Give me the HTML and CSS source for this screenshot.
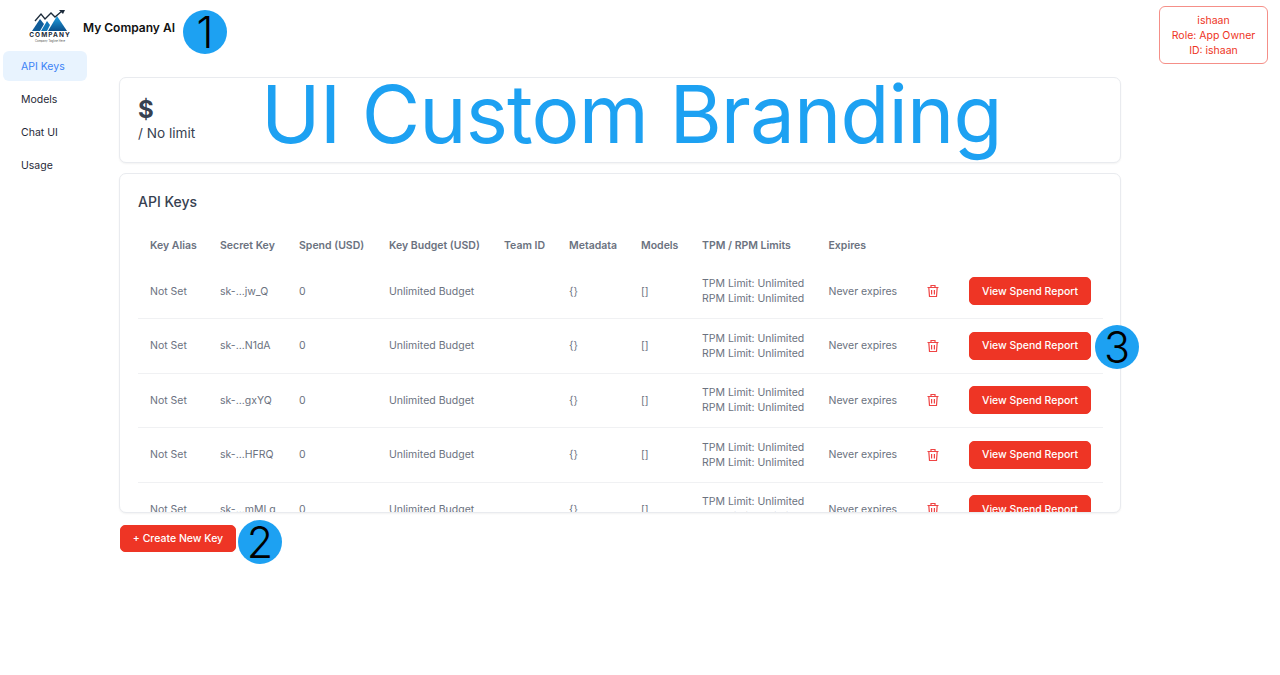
FILE: index.html
```html
<!DOCTYPE html>
<html lang="en">
<head>
  <meta charset="UTF-8">
  <meta name="viewport" content="width=device-width, initial-scale=1.0">
  <title>My Company AI</title>
  <link rel="stylesheet" href="styles.css">
</head>
<body>
  <header class="topbar">
    <div class="logo">
      <svg class="logo-mark" width="46" height="22" viewBox="0 0 46 22">
        <defs>
          <linearGradient id="peak" x1="0" y1="0" x2="0" y2="1">
            <stop offset="0" stop-color="#1f9fe0"/>
            <stop offset="1" stop-color="#0b4f8a"/>
          </linearGradient>
        </defs>
        <path d="M5 21 L13 9 L17 14 L13 21 Z" fill="#0f5c99"/>
        <path d="M14 21 L20 11 L23 15 L20 21 Z" fill="#1277b8"/>
        <path d="M21 21 L30 6 L40 21 Z" fill="url(#peak)"/>
        <path d="M8 11 L14 4 L18 9 L24 3 L28 7 L35 1" fill="none" stroke="#1c2b3a" stroke-width="1.3"/>
        <path d="M32 0 L38 0 L36 4 Z" fill="#1c2b3a"/>
      </svg>
      <div class="logo-name">COMPANY</div>
      <div class="logo-tag">Company Tagline Here</div>
    </div>
    <div class="brand">My Company AI</div>
    <div class="user-box">
      <div>ishaan</div>
      <div>Role: App Owner</div>
      <div>ID: ishaan</div>
    </div>
  </header>

  <div class="layout">
    <nav class="sidebar">
      <a class="nav-item active">API Keys</a>
      <a class="nav-item">Models</a>
      <a class="nav-item">Chat UI</a>
      <a class="nav-item">Usage</a>
    </nav>

    <main class="content">
      <section class="card spend-card">
        <div class="spend-value">$</div>
        <div class="spend-limit">/ No limit</div>
      </section>

      <section class="card keys-card">
        <h3 class="card-title">API Keys</h3>
        <table class="keys-table">
          <colgroup>
            <col class="c-alias"><col class="c-secret"><col class="c-spend"><col class="c-budget"><col class="c-team">
            <col class="c-meta"><col class="c-models"><col class="c-limits"><col class="c-expires"><col class="c-trash"><col class="c-report">
          </colgroup>
          <thead>
            <tr>
              <th>Key Alias</th><th>Secret Key</th><th>Spend (USD)</th><th>Key Budget (USD)</th><th>Team ID</th>
              <th>Metadata</th><th>Models</th><th>TPM / RPM Limits</th><th>Expires</th><th></th><th></th>
            </tr>
          </thead>
          <tbody>
            <tr>
              <td>Not Set</td><td>sk-...jw_Q</td><td>0</td><td>Unlimited Budget</td><td></td><td>{}</td><td>[]</td>
              <td>TPM Limit: Unlimited<br>RPM Limit: Unlimited</td><td>Never expires</td>
              <td><svg class="trash" viewBox="0 0 14 14"><path d="M1.5 3.5h11M5 3.5V1.5h4v2M2.8 3.5l.7 9h7l.7-9M5.6 6v4.5M8.4 6v4.5"/></svg></td>
              <td><button class="btn">View Spend Report</button></td>
            </tr>
            <tr>
              <td>Not Set</td><td>sk-...N1dA</td><td>0</td><td>Unlimited Budget</td><td></td><td>{}</td><td>[]</td>
              <td>TPM Limit: Unlimited<br>RPM Limit: Unlimited</td><td>Never expires</td>
              <td><svg class="trash" viewBox="0 0 14 14"><path d="M1.5 3.5h11M5 3.5V1.5h4v2M2.8 3.5l.7 9h7l.7-9M5.6 6v4.5M8.4 6v4.5"/></svg></td>
              <td><button class="btn">View Spend Report</button></td>
            </tr>
            <tr>
              <td>Not Set</td><td>sk-...gxYQ</td><td>0</td><td>Unlimited Budget</td><td></td><td>{}</td><td>[]</td>
              <td>TPM Limit: Unlimited<br>RPM Limit: Unlimited</td><td>Never expires</td>
              <td><svg class="trash" viewBox="0 0 14 14"><path d="M1.5 3.5h11M5 3.5V1.5h4v2M2.8 3.5l.7 9h7l.7-9M5.6 6v4.5M8.4 6v4.5"/></svg></td>
              <td><button class="btn">View Spend Report</button></td>
            </tr>
            <tr>
              <td>Not Set</td><td>sk-...HFRQ</td><td>0</td><td>Unlimited Budget</td><td></td><td>{}</td><td>[]</td>
              <td>TPM Limit: Unlimited<br>RPM Limit: Unlimited</td><td>Never expires</td>
              <td><svg class="trash" viewBox="0 0 14 14"><path d="M1.5 3.5h11M5 3.5V1.5h4v2M2.8 3.5l.7 9h7l.7-9M5.6 6v4.5M8.4 6v4.5"/></svg></td>
              <td><button class="btn">View Spend Report</button></td>
            </tr>
            <tr>
              <td>Not Set</td><td>sk-...mMLq</td><td>0</td><td>Unlimited Budget</td><td></td><td>{}</td><td>[]</td>
              <td>TPM Limit: Unlimited<br>RPM Limit: Unlimited</td><td>Never expires</td>
              <td><svg class="trash" viewBox="0 0 14 14"><path d="M1.5 3.5h11M5 3.5V1.5h4v2M2.8 3.5l.7 9h7l.7-9M5.6 6v4.5M8.4 6v4.5"/></svg></td>
              <td><button class="btn">View Spend Report</button></td>
            </tr>
          </tbody>
        </table>
      </section>

      <button class="btn btn-create">+ Create New Key</button>
    </main>
  </div>

  <!-- annotations drawn over the screenshot -->
  <div class="banner">UI Custom Branding</div>
  <div class="marker marker-1">1</div>
  <div class="marker marker-2">2</div>
  <div class="marker marker-3">3</div>
</body>
</html>
```

FILE: styles.css
```css
* {
  box-sizing: border-box;
}
body {
  margin: 0;
  position: relative;
  height: 675px;
  overflow: hidden;
  background-color: #fff;
  color: #6b7280;
  font-family: Inter, "Noto Sans", sans-serif;
}

.topbar {
  display: flex;
  height: 51px;
  padding-left: 27px;
  padding-right: 12px;
}
.logo {
  width: 46px;
  padding-top: 10px;
  text-align: center;
}
.logo-mark {
  display: block;
}
.logo-name {
  margin-top: 0;
  color: #1c2b3a;
  font-size: 6.5px;
  font-weight: 700;
  letter-spacing: 1.05px;
  line-height: 7px;
  white-space: nowrap;
}
.logo-tag {
  color: #555;
  font-size: 2.8px;
  line-height: 4px;
  white-space: nowrap;
}
.brand {
  margin-left: 10px;
  padding-top: 20px;
  color: #111;
  font-size: 12px;
  font-weight: 600;
  line-height: 16px;
  white-space: nowrap;
}
.user-box {
  margin-left: auto;
  margin-top: 6px;
  width: 109px;
  height: 58px;
  padding-top: 6px;
  border: 1px solid #f58f88;
  border-radius: 6px;
  color: #ee3525;
  font-size: 10.5px;
  line-height: 15px;
  text-align: center;
}

.layout {
  display: flex;
}
.sidebar {
  display: flex;
  flex-direction: column;
  gap: 3px;
  width: 90px;
  padding-left: 3px;
  padding-right: 3px;
}
.nav-item {
  height: 30px;
  padding-left: 18px;
  border-radius: 6px;
  color: #1f2937;
  font-size: 10.5px;
  line-height: 31px;
}
.nav-item.active {
  background-color: #e8f3fe;
  color: #3b82f6;
}

.content {
  width: 1002px;
  margin-left: 29px;
  padding-top: 26px;
}
.card {
  border: 1px solid #e9ebef;
  border-radius: 7px;
  box-shadow: 0 1px 2px rgba(0, 0, 0, 0.05);
  background-color: #fff;
}
.spend-card {
  height: 86px;
  padding: 19px 18px 0;
  color: #374151;
}
.spend-value {
  font-size: 24px;
  font-weight: 700;
  line-height: 26px;
}
.spend-limit {
  font-size: 13.6px;
  line-height: 20px;
}
.keys-card {
  height: 340px;
  margin-top: 10px;
  padding: 18px 18px 0;
  overflow: hidden;
}
.card-title {
  margin: 0 0 14px;
  color: #374151;
  font-size: 14px;
  font-weight: 500;
  line-height: 20px;
}

.keys-table {
  width: 965px;
  table-layout: fixed;
  border-collapse: collapse;
  font-size: 10.5px;
  line-height: 15px;
}
.c-alias { width: 70px; }
.c-secret { width: 79px; }
.c-spend { width: 90px; }
.c-budget { width: 115px; }
.c-team { width: 65px; }
.c-meta { width: 72px; }
.c-models { width: 61px; }
.c-limits { width: 126.5px; }
.c-expires { width: 93.5px; }
.c-trash { width: 47px; }
.c-report { width: 146px; }

.keys-table th {
  height: 38px;
  padding: 0 12px;
  font-weight: 600;
  text-align: left;
  white-space: nowrap;
}
.keys-table td {
  height: 54.5px;
  padding: 0 12px;
  white-space: nowrap;
}
.keys-table tbody tr {
  border-bottom: 1px solid #f0f1f3;
}
.trash {
  display: block;
  width: 14px;
  height: 14px;
  margin-left: 4px;
  fill: none;
  stroke: #ef4444;
  stroke-width: 1.2;
}

.btn {
  height: 28px;
  padding: 0 12px;
  border: 1px solid #ee3525;
  border-radius: 5px;
  background-color: #ee3525;
  color: #fff;
  font-family: inherit;
  font-size: 10.5px;
  font-weight: 500;
  white-space: nowrap;
}
.btn-create {
  display: block;
  width: 116px;
  height: 27px;
  margin-top: 12px;
  margin-left: 1px;
  padding: 0;
}
.keys-table .btn {
  display: block;
  width: 122px;
  padding: 0;
}

.banner {
  position: absolute;
  left: 261px;
  top: 64px;
  color: #1da1f2;
  font-size: 80px;
  letter-spacing: -0.9px;
  line-height: 100px;
  white-space: nowrap;
}
.marker {
  position: absolute;
  width: 44px;
  height: 44px;
  border-radius: 50%;
  background-color: #1da1f2;
  color: #000;
  font-size: 43px;
  font-weight: 300;
  line-height: 44px;
  text-align: center;
}
.marker-1 { left: 183px; top: 10px; }
.marker-2 { left: 238px; top: 520px; }
.marker-3 { left: 1095px; top: 325px; }
```
